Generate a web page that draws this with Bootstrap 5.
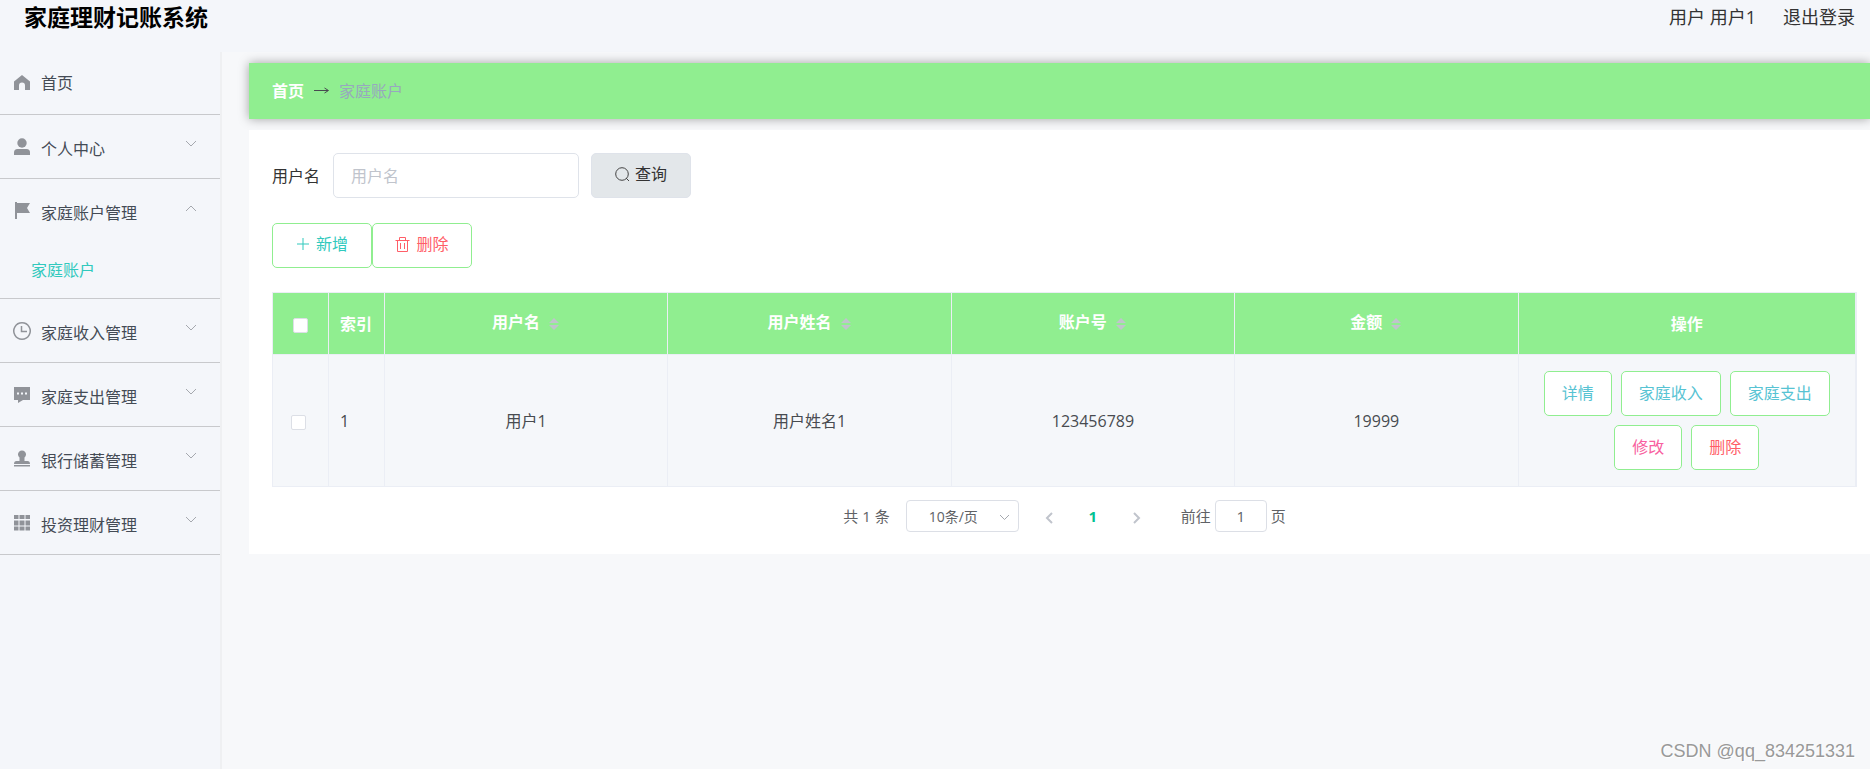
<!DOCTYPE html>
<html lang="zh-CN">
<head>
<meta charset="utf-8">
<meta name="viewport" content="width=device-width, initial-scale=1">
<title>家庭理财记账系统</title>
<link rel="stylesheet" href="https://cdn.jsdelivr.net/npm/bootstrap@5.3.0/dist/css/bootstrap.min.css">
<style>
body{font-family:"Open Sans","Noto Sans CJK SC",sans-serif;font-size:16px;line-height:24px;color:#333;background:#f7f8fa}
a{color:inherit;text-decoration:none}
.topbar{height:52px;background:#f4f6fa;padding:0 15px 18px 24px}
.topbar h1{font-size:23px;line-height:34px;color:#000}
.topbar .user-links{font-size:18px;gap:27px}
.sidebar{width:222px;background:#f4f6fa;border-right:2px solid #eff0f2;color:#444b55}
.menu-item{border-bottom:1px solid #c8c9cc}
.menu-item:first-child .menu-link{height:62px}
.menu-link{height:63px;padding:0 23px 0 12px;gap:9px}
.menu-link .ico{width:20px;height:20px;fill:#909399;flex:none}
.menu-link .label{padding-top:4px}
.menu-item:first-child .label{padding-top:0}
.menu-link .arrow{width:12px;height:8px;margin-left:auto;margin-bottom:6px}
.arrow,.line{fill:none;stroke:#a5a8ae}
.submenu a{display:block;height:56px;padding:16px 0 0 31px;color:#31c9bd}
.main-area{padding:11px 0 0 27px}
.crumbs{height:56px;padding:0 23px;background:#90ee90;box-shadow:0 0 10px rgba(0,0,0,.35);gap:10px}
.crumbs .current{color:#97a8be}
.panel{background:#fff;margin-top:11px;padding:23px 13px 22px 23px}
.ctl{height:45px;border-radius:5px;font-size:16px;border:1px solid #dfe3ea}
.query-input{width:246px;padding:0 17px;margin:0 12px 0 13px}
.query-input::placeholder{color:#c0c4cc}
.tool{width:100px;padding:0 0 3px;gap:6px}
.search{background:#e3e7ea;color:#333}
.actions{margin-top:25px}
.outline{border:1px solid #90ee90;border-radius:5px;background:#fff;height:45px}
.teal{color:#31c9bd}.red{color:#ff5e68}.blue{color:#57c3d3}.pink{color:#f85fa0}
.data-table{table-layout:fixed;border:1px solid #ebeef5;border-right-width:2px;margin:24px 0 0}
.data-table th,.data-table td{border:1px solid #ebeef5;padding:0 11px;vertical-align:middle;text-align:center}
.data-table th{background:#90ee90;color:#fff;height:62px;font-weight:700}
.data-table td{background:#f5f7fa;color:#484b50;height:132px}
.data-table .start{text-align:left}
.col-tick{width:56px}.col-ops{width:338px}
.tick{width:15px;height:15px;margin:0;border:1px solid #dcdfe6;vertical-align:middle}
.form-check-input.tick{border-radius:2px}
.sortable{padding-bottom:3px}
.sortable svg{width:12px;height:14px;fill:#c0c4cc;margin-left:4px}
.ops{gap:9px}
.ops .btn{padding:0 17px 2px}
.pager{font-size:15px;color:#606266;padding-top:13px;height:45px}
.pager .form-select,.pager .form-control{font-size:14px;color:#606266;border:1px solid #dcdfe6;border-radius:4px;height:32px;padding:0}
.pager .form-select{width:113px;padding-left:22px;margin-left:16px;background-image:none}
.select-wrap svg{right:9px;top:14px;width:11px;height:7px}
.pager button{border:0;background:none;width:44px;padding:0;height:32px}
.pager .active-page{color:#00c292;font-weight:700;font-size:15px}
.pager .page-input{width:52px;text-align:center;margin:0 4px;font-size:15px}
.goto{margin-left:22px}
.watermark{right:15px;bottom:6px;font:18px/24px "Liberation Sans",sans-serif;color:#999;text-shadow:1px 1px 0 #fff}
</style>
</head>
<body class="min-vh-100 d-flex flex-column position-relative overflow-x-hidden">
<header class="topbar d-flex justify-content-between align-items-center">
  <h1 class="m-0 fw-bold">家庭理财记账系统</h1>
  <div class="user-links d-flex"><span>用户 用户1</span><a href="#">退出登录</a></div>
</header>
<div class="d-flex flex-grow-1">
  <nav class="sidebar flex-shrink-0">
    <ul class="list-unstyled m-0">
      <li class="menu-item"><a href="#" class="menu-link d-flex align-items-center"><svg class="ico" viewBox="0 0 20 20"><path d="M10 2 18 8.500V17h-5v-4.500a3 3 0 0 0-6 0V17H2V8.500z"/></svg><span class="label">首页</span></a></li>
      <li class="menu-item"><a href="#" class="menu-link d-flex align-items-center"><svg class="ico" viewBox="0 0 20 20"><circle cx="10" cy="6" r="4.700"/><path d="M2 18v-2.500q0-3.500 3.500-3.500h9q3.500 0 3.500 3.500V18z"/></svg><span class="label">个人中心</span><svg class="arrow" viewBox="0 0 12 8"><path d="m1 1 5 5 5-5"/></svg></a></li>
      <li class="menu-item"><a href="#" class="menu-link d-flex align-items-center"><svg class="ico" viewBox="0 0 20 20"><path d="M3 1h2v17H3zM5 2h13l-3 5 3 5H5z"/></svg><span class="label">家庭账户管理</span><svg class="arrow" viewBox="0 0 12 8"><path d="m1 7 5-5 5 5"/></svg></a>
        <div class="submenu"><a href="#">家庭账户</a></div></li>
      <li class="menu-item"><a href="#" class="menu-link d-flex align-items-center"><svg class="ico" viewBox="0 0 20 20"><path d="M10 1.800a8.200 8.200 0 1 0 .01 0M9.500 5v5.500H15" fill="none" stroke="#909399" stroke-width="1.500"/></svg><span class="label">家庭收入管理</span><svg class="arrow" viewBox="0 0 12 8"><path d="m1 1 5 5 5-5"/></svg></a></li>
      <li class="menu-item"><a href="#" class="menu-link d-flex align-items-center"><svg class="ico" viewBox="0 0 20 20"><path fill-rule="evenodd" d="M2 2h16v13h-7l-5 3v-3H2zM5 7.500v2h2v-2zm4 0v2h2v-2zm4 0v2h2v-2z"/></svg><span class="label">家庭支出管理</span><svg class="arrow" viewBox="0 0 12 8"><path d="m1 1 5 5 5-5"/></svg></a></li>
      <li class="menu-item"><a href="#" class="menu-link d-flex align-items-center"><svg class="ico" viewBox="0 0 20 20"><path d="M7.500 8.500a4 4 0 1 1 5 0V12h3q2.500 0 2.500 3H2q0-3 2.500-3h3zM2 16h16v1.500H2z"/></svg><span class="label">银行储蓄管理</span><svg class="arrow" viewBox="0 0 12 8"><path d="m1 1 5 5 5-5"/></svg></a></li>
      <li class="menu-item"><a href="#" class="menu-link d-flex align-items-center"><svg class="ico" viewBox="0 0 20 20"><path d="M2 2h4.500v4H2zm5.500 0h5v4h-5zm6 0H18v4h-4.500zM2 7.500h4.500v5H2zm5.500 0h5v5h-5zm6 0H18v5h-4.500zM2 13.500h4.500v4H2zm5.500 0h5v4h-5zm6 0H18v4h-4.500z"/></svg><span class="label">投资理财管理</span><svg class="arrow" viewBox="0 0 12 8"><path d="m1 1 5 5 5-5"/></svg></a></li>
    </ul>
  </nav>
  <main class="main-area flex-grow-1">
    <nav class="crumbs d-flex align-items-center">
      <a href="#" class="text-white fw-bold">首页</a>
      <svg width="15" height="8" viewBox="0 0 15 8" fill="none" stroke="#484b50"><path d="M0 3.500h14M10.500 1l4 2.500-4 2.500"/></svg>
      <span class="current">家庭账户</span>
    </nav>
    <section class="panel">
      <form class="d-flex align-items-center">
        <label for="uname">用户名</label>
        <input id="uname" class="form-control ctl query-input" placeholder="用户名">
        <button type="button" class="btn ctl tool search d-flex align-items-center justify-content-center"><svg width="14" height="14" viewBox="0 0 14 14" fill="none" stroke="#444"><circle cx="7" cy="7" r="6.300"/><path d="m11 11 3 3"/></svg>查询</button>
      </form>
      <div class="d-flex actions">
        <button type="button" class="btn outline tool teal d-flex align-items-center justify-content-center"><svg width="14" height="14" viewBox="0 0 14 14" stroke="currentColor"><path d="M7 1v12M1 7h12"/></svg>新增</button>
        <button type="button" class="btn outline tool red d-flex align-items-center justify-content-center"><svg width="15" height="15" viewBox="0 0 15 15" fill="none" stroke="currentColor"><path d="M.5 3.500h14M4.500 3V.5h6V3M2.500 4v10.500h10V4M5.500 6v6M9.500 6v6"/></svg>删除</button>
      </div>
      <table class="table data-table">
        <colgroup><col class="col-tick"><col class="col-tick"><col><col><col><col><col class="col-ops"></colgroup>
        <thead><tr>
          <th><input type="checkbox" class="form-check-input tick" aria-label="全选"></th>
          <th class="start">索引</th>
          <th><div class="sortable">用户名 <svg viewBox="0 0 12 14"><path d="m1 6 5-5 5 5zM1 8h10l-5 5z"/></svg></div></th>
          <th><div class="sortable">用户姓名 <svg viewBox="0 0 12 14"><path d="m1 6 5-5 5 5zM1 8h10l-5 5z"/></svg></div></th>
          <th><div class="sortable">账户号 <svg viewBox="0 0 12 14"><path d="m1 6 5-5 5 5zM1 8h10l-5 5z"/></svg></div></th>
          <th><div class="sortable">金额 <svg viewBox="0 0 12 14"><path d="m1 6 5-5 5 5zM1 8h10l-5 5z"/></svg></div></th>
          <th>操作</th>
        </tr></thead>
        <tbody><tr>
          <td class="pe-3"><input type="checkbox" class="form-check-input tick" aria-label="选择第1行"></td>
          <td class="start">1</td><td>用户1</td><td>用户姓名1</td><td>123456789</td><td>19999</td>
          <td><div class="ops d-flex flex-wrap justify-content-center">
            <button type="button" class="btn outline blue">详情</button>
            <button type="button" class="btn outline blue">家庭收入</button>
            <button type="button" class="btn outline blue">家庭支出</button>
            <button type="button" class="btn outline pink">修改</button>
            <button type="button" class="btn outline red">删除</button>
          </div></td>
        </tr></tbody>
      </table>
      <div class="pager d-flex justify-content-center align-items-center">
        <span>共 1 条</span>
        <div class="select-wrap position-relative me-2">
          <select class="form-select" aria-label="每页条数"><option>10条/页</option></select>
          <svg class="position-absolute line" viewBox="0 0 11 7"><path d="m1 1 4.500 4.500L10 1"/></svg>
        </div>
        <button type="button" aria-label="上一页"><svg width="8" height="12" viewBox="0 0 8 12" fill="none" stroke="#c0c4cc" stroke-width="2"><path d="M7 1 2 6l5 5"/></svg></button>
        <button type="button" class="active-page">1</button>
        <button type="button" aria-label="下一页"><svg width="8" height="12" viewBox="0 0 8 12" fill="none" stroke="#c0c4cc" stroke-width="2"><path d="m1 1 5 5-5 5"/></svg></button>
        <label for="goto" class="goto">前往</label>
        <input id="goto" class="form-control page-input" value="1"><span>页</span>
      </div>
    </section>
  </main>
</div>
<div class="watermark position-absolute">CSDN @qq_834251331</div>
<script src="https://cdn.jsdelivr.net/npm/bootstrap@5.3.0/dist/js/bootstrap.bundle.min.js"></script>
</body>
</html>
